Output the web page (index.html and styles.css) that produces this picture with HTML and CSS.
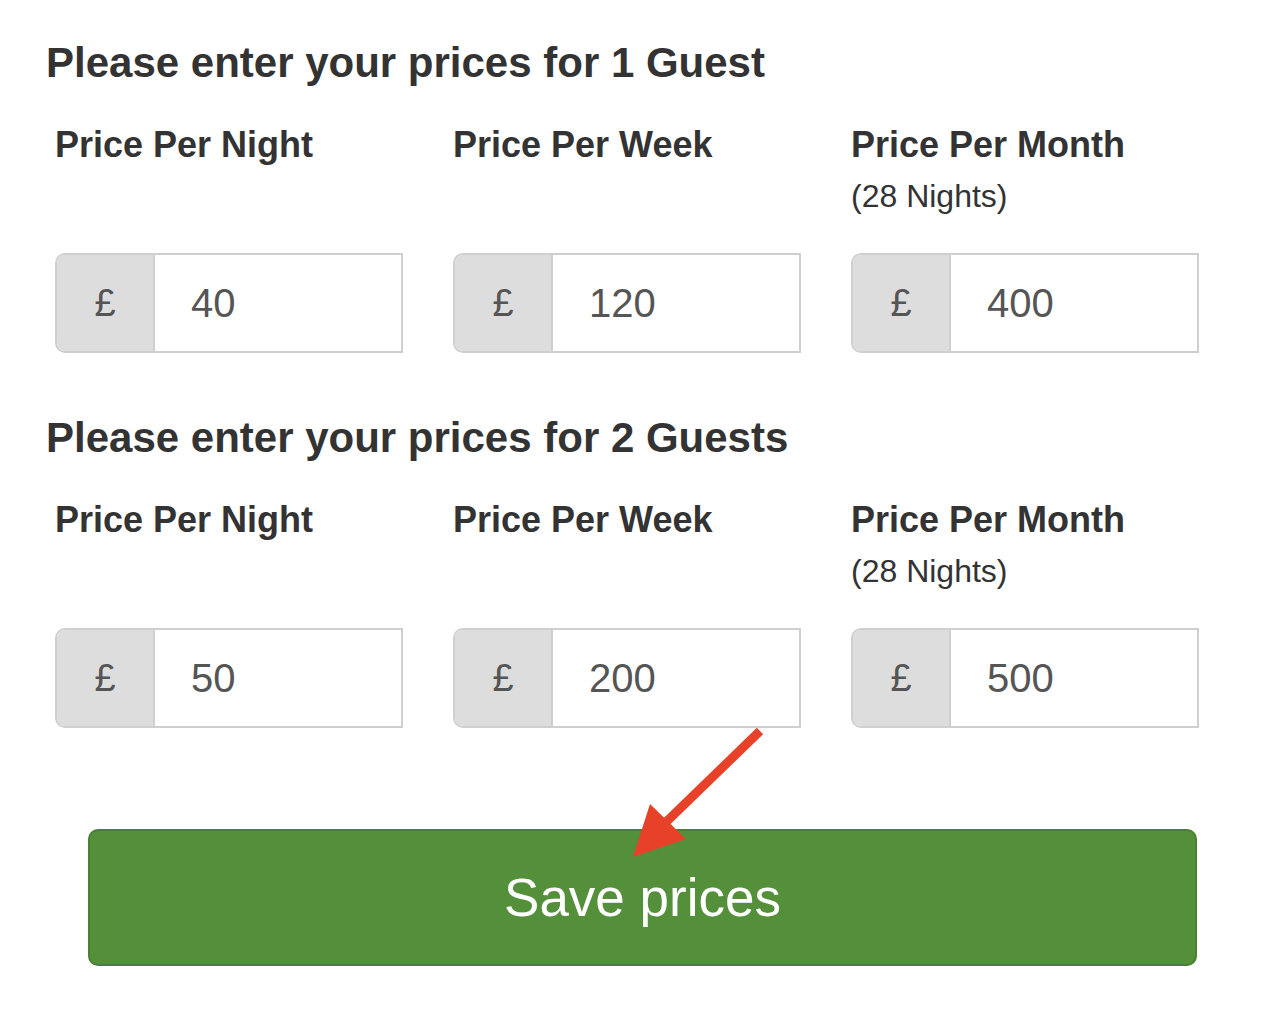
FILE: index.html
```html
<!DOCTYPE html>
<html>
<head>
<meta charset="utf-8">
<link rel="stylesheet" href="styles.css">
</head>
<body>
<div class="page">
  <section class="guest-block">
    <h2 class="heading">Please enter your prices for 1 Guest</h2>
    <div class="price-grid">
      <div class="field">
        <div class="label">Price Per Night</div>
        <div class="group"><span class="addon">£</span><span class="value">40</span></div>
      </div>
      <div class="field">
        <div class="label">Price Per Week</div>
        <div class="group"><span class="addon">£</span><span class="value">120</span></div>
      </div>
      <div class="field">
        <div class="label">Price Per Month</div>
        <div class="sublabel">(28 Nights)</div>
        <div class="group"><span class="addon">£</span><span class="value">400</span></div>
      </div>
    </div>
  </section>
  <section class="guest-block second">
    <h2 class="heading">Please enter your prices for 2 Guests</h2>
    <div class="price-grid">
      <div class="field">
        <div class="label">Price Per Night</div>
        <div class="group"><span class="addon">£</span><span class="value">50</span></div>
      </div>
      <div class="field">
        <div class="label">Price Per Week</div>
        <div class="group"><span class="addon">£</span><span class="value">200</span></div>
      </div>
      <div class="field">
        <div class="label">Price Per Month</div>
        <div class="sublabel">(28 Nights)</div>
        <div class="group"><span class="addon">£</span><span class="value">500</span></div>
      </div>
    </div>
  </section>
  <div class="actions">
    <button class="save">Save prices</button>
  </div>
  <svg class="arrow" width="1284" height="1033" viewBox="0 0 1284 1033">
    <line x1="760" y1="731" x2="662" y2="826" stroke="#e8412a" stroke-width="9"/>
    <polygon points="633,857 650,804 686,839" fill="#e8412a"/>
  </svg>
</div>
</body>
</html>
```
FILE: styles.css
```css
* { box-sizing: border-box; }
html, body { margin: 0; padding: 0; background: #fff; }
body { font-family: "Liberation Sans", Arial, sans-serif; color: #333; }
.page { position: relative; width: 1284px; height: 1033px; padding: 39px 0 0 46px; }
.guest-block.second { margin-top: 61px; }
.heading { margin: 0; font-size: 42px; line-height: 48px; font-weight: bold; color: #333; }
.price-grid {
  display: grid;
  grid-template-columns: 348px 348px 348px;
  column-gap: 50px;
  margin: 36px 0 0 9px;
}
.field { display: flex; flex-direction: column; }
.label { font-size: 36px; line-height: 44px; font-weight: bold; color: #333; }
.sublabel { margin: 4px 0 32px; font-size: 32px; line-height: 50px; color: #333; }
.group {
  margin-top: auto;
  display: flex;
  height: 100px;
  border: 2px solid #cfcfcf;
  border-radius: 10px 0 0 10px;
  overflow: hidden;
}
.addon {
  width: 98px;
  background: #dddddd;
  border-right: 2px solid #cfcfcf;
  display: flex;
  align-items: center;
  justify-content: center;
  font-size: 38px;
  color: #555;
}
.value {
  flex: 1;
  display: flex;
  align-items: center;
  padding-left: 36px;
  font-size: 40px;
  color: #555;
  background: #fff;
}
.actions { margin: 101px 0 0 42px; }
.save {
  display: block;
  width: 1109px;
  height: 137px;
  background: #548f3a;
  border: 2px solid #4b7f33;
  border-radius: 10px;
  color: #fff;
  font-family: "Liberation Sans", Arial, sans-serif;
  font-size: 53px;
  padding: 0;
}
.arrow { position: absolute; left: 0; top: 0; pointer-events: none; }
```
